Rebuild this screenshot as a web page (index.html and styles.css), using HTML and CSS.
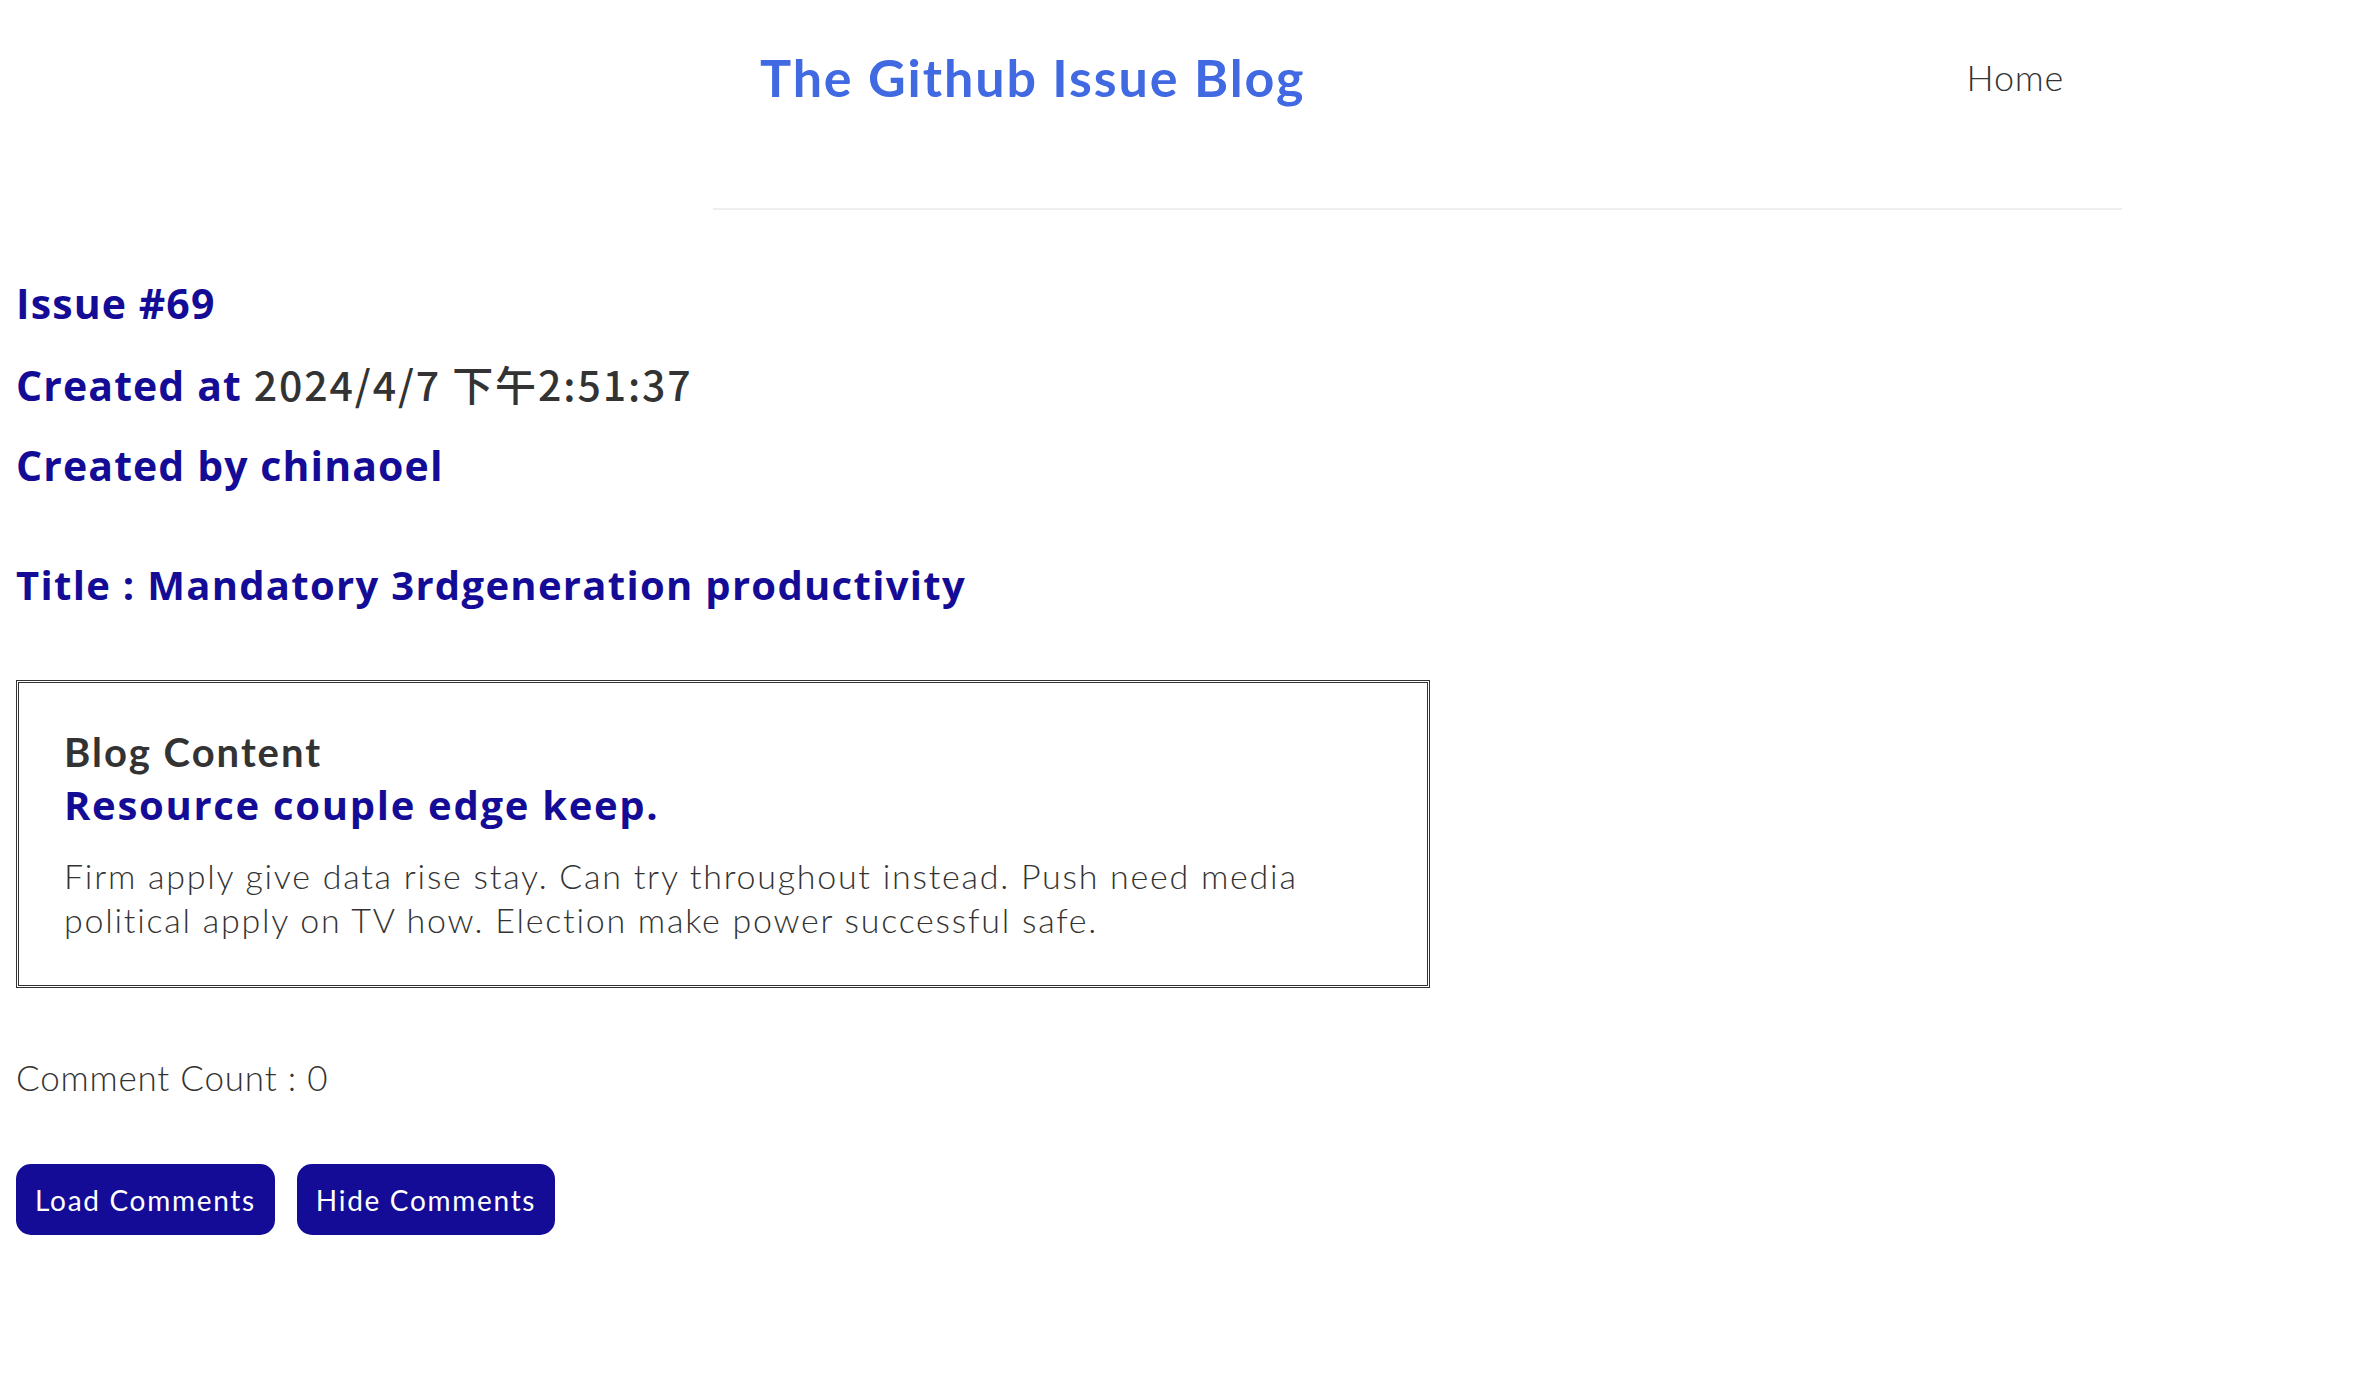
FILE: index.html
```html
<!DOCTYPE html>
<html lang="en">
<head>
<meta charset="utf-8">
<title>The Github Issue Blog</title>
<link rel="stylesheet" href="styles.css">
</head>
<body>
<header class="site-header">
  <div class="header-inner">
    <a class="brand" href="#">The Github Issue Blog</a>
    <nav class="nav"><a class="nav-link" href="#">Home</a></nav>
  </div>
</header>
<main class="issue">
  <h2 class="meta">Issue #69</h2>
  <h2 class="meta">Created at <span class="date">2024/4/7 下午2:51:37</span></h2>
  <h2 class="meta">Created by chinaoel</h2>
  <h2 class="issue-title">Title : Mandatory 3rdgeneration productivity</h2>
  <section class="content-box">
    <h3 class="box-label">Blog Content</h3>
    <h2 class="box-heading">Resource couple edge keep.</h2>
    <p class="box-text">Firm apply give data rise stay. Can try throughout instead. Push need media political apply on TV how. Election make power successful safe.</p>
  </section>
  <p class="comment-count">Comment Count : 0</p>
  <div class="actions">
    <button class="btn">Load Comments</button>
    <button class="btn">Hide Comments</button>
  </div>
</main>
</body>
</html>
```
FILE: styles.css
```css
* { box-sizing: border-box; }
html, body { margin: 0; padding: 0; background: #fff; }
body {
  font-family: "Lato", "Noto Sans", sans-serif;
  color: #333;
}
.site-header { padding-top: 40px; }
.header-inner {
  margin-left: 713px;
  width: 1409px;
  display: flex;
  justify-content: space-between;
  align-items: center;
  padding: 0 58px 94px 47px;
  border-bottom: 2px solid #eeeeee;
}
.brand {
  font-size: 52px;
  line-height: 74px;
  font-weight: 700;
  letter-spacing: 1.9px;
  color: #4169e1;
  text-decoration: none;
}
.nav-link {
  font-size: 36px;
  font-weight: 300;
  letter-spacing: 0.75px;
  color: #333;
  text-decoration: none;
}
.issue { padding: 0 16px; }
.meta, .issue-title, .box-heading {
  font-family: "Open Sans", "Lato", sans-serif;
}
.meta {
  margin: 0 0 30px 0;
  font-size: 41px;
  line-height: 50px;
  font-weight: 700;
  letter-spacing: 1.1px;
  color: #140c96;
}
.meta:first-child { margin-top: 68px; }
.date {
  font-family: "Noto Sans CJK TC", sans-serif;
  font-weight: 500;
  letter-spacing: 1.9px;
  color: #333;
}
.issue-title {
  margin: 70px 0 70px 0;
  font-size: 40px;
  line-height: 50px;
  font-weight: 700;
  letter-spacing: 1.3px;
  color: #140c96;
}
.content-box {
  width: 1414px;
  border: 3px double #333;
  padding: 45px 45px 43px 45px;
}
.box-label {
  margin: 0;
  font-size: 40px;
  line-height: 48px;
  font-weight: 700;
  letter-spacing: 2px;
  color: #333;
}
.box-heading {
  margin: 5px 0 0 0;
  font-size: 40px;
  line-height: 48px;
  font-weight: 700;
  letter-spacing: 1.7px;
  color: #140c96;
}
.box-text {
  margin: 25px 0 0 0;
  font-size: 34px;
  line-height: 44px;
  font-weight: 300;
  letter-spacing: 1.75px;
  color: #333;
}
.comment-count {
  margin: 67px 0 0 0;
  font-size: 35px;
  line-height: 44px;
  font-weight: 300;
  letter-spacing: 0.8px;
  color: #333;
}
.actions {
  margin-top: 65px;
  display: flex;
  gap: 22px;
}
.btn {
  height: 71px;
  padding: 0 19px;
  border: none;
  border-radius: 15px;
  background: #140c96;
  color: #fff;
  font-family: inherit;
  font-size: 28px;
  font-weight: 400;
  letter-spacing: 1.7px;
  cursor: pointer;
}
```
